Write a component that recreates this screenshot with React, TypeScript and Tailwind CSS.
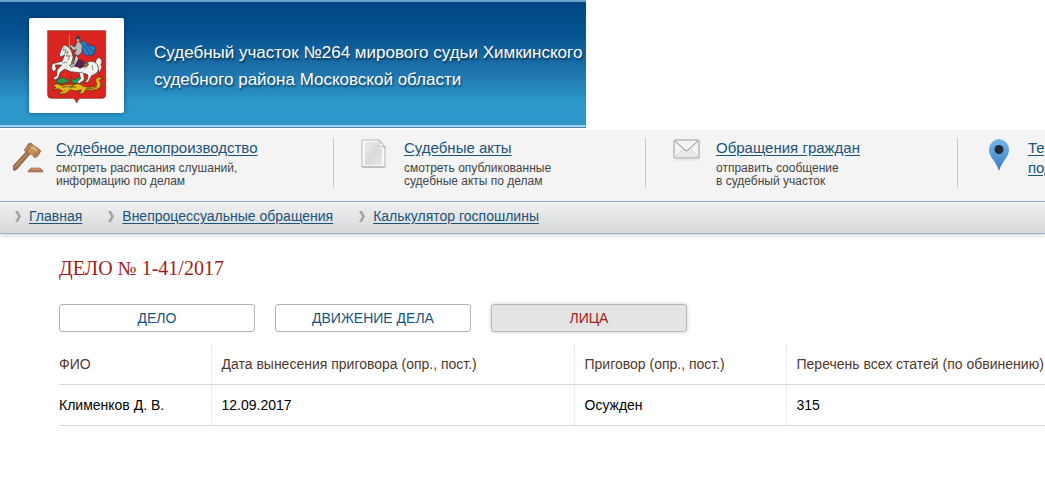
import type { ReactNode } from 'react';

type Service = {
  title: string;
  description?: string[];
  icon: ReactNode;
};

const Emblem = () => (
  <svg viewBox="12 10 285 285" className="block size-[95px]" role="img" aria-label="Герб Московской области">
    <path d="M68 48H242V240Q242 251 231 251H168Q159 251 155 265Q151 251 142 251H79Q68 251 68 240Z" fill="#da2420" stroke="#7d2524" strokeWidth="2" />
    {/* dragon */}
    <g stroke="#3c3512" strokeWidth="2" strokeLinejoin="round">
      <path d="M93 204Q99 185 120 190L134 202L119 205L107 207Z" fill="#249a4c" />
      <path d="M137 188Q149 203 166 181L168 204L150 208L140 202Z" fill="#249a4c" />
      <path d="M82 212L97 207L111 213Q126 206 145 211Q158 203 166 209Q179 220 200 217Q222 215 213 203Q208 194 219 188Q230 184 230 193L222 197Q236 214 217 224Q200 230 183 225L174 237L163 238L169 226L151 229L136 225L121 237L99 239L112 228L98 222L86 227L92 217Z" fill="#e6b51b" />
      <path d="M111 218Q134 213 153 218M182 222Q203 225 217 216M122 225L114 233M146 212L134 221" fill="none" />
    </g>
    {/* tail */}
    <path d="M211 142Q217 125 226 130Q235 138 228 151Q235 158 226 167L223 177L219 163L212 169L217 153L208 151Z" fill="#eeeeec" stroke="#302927" strokeWidth="2" />
    {/* horse */}
    <path d="M112 97L119 91L124 94Q137 98 140 112L145 130L163 143L187 143Q205 134 217 150Q225 165 213 177L200 183L190 202L178 205L187 193L189 181L176 175L178 196L164 206L154 204L167 192L162 174L136 171L121 164L106 173L100 190L88 197L86 188L95 184L96 166L110 151L91 151L94 164L85 172L79 160L82 147L111 140L119 121L107 127L102 121Z" fill="#f3f3f0" stroke="#342d2b" strokeWidth="2" strokeLinejoin="round" />
    <path d="M118 97L115 108L124 104L119 116L129 110L124 125L136 123L129 136M112 145L125 143M119 162L110 170M190 150L181 162M201 151L204 166M162 174L174 173" fill="none" stroke="#5b5552" strokeWidth="2" />
    {/* saddle */}
    <path d="M144 130L164 145L188 145L190 151L179 157L150 156L139 146Z" fill="#a37a2d" stroke="#3a292c" strokeWidth="2" />
    <path d="M149 138Q163 130 178 143Q178 157 165 161L150 151Z" fill="#632052" stroke="#33212c" strokeWidth="2" />
    {/* rider */}
    <path d="M167 81Q183 75 187 90L208 94L213 107L207 108L211 117L202 116L202 124L192 120L186 124L177 118L171 105Z" fill="#2580c2" stroke="#243a5c" strokeWidth="2" />
    <path d="M176 91L193 116M183 89L203 111" stroke="#134f93" strokeWidth="3" />
    <path d="M158 79L167 84L172 93L171 113L159 124L147 119L154 104L145 108L134 94L138 89L149 97Z" fill="#b8bcbf" stroke="#28292c" strokeWidth="2" />
    <path d="M154 120L161 132L151 151L140 158L133 152L146 147L149 132Z" fill="#d0d2d2" stroke="#302d30" strokeWidth="2" />
    <ellipse cx="159" cy="76" rx="5" ry="6" fill="#d4ad90" stroke="#34292b" />
    <path d="M153 75Q150 61 161 63Q168 66 166 78L160 72Z" fill="#3b4046" />
    <path d="M133 60V104" stroke="#c8962e" strokeWidth="3" />
    <path d="M133 103L125 153L113 207" fill="none" stroke="#bd8637" strokeWidth="1" />
  </svg>
);

const GavelIcon = () => (
  <svg viewBox="0 0 32 34" className="h-[34px] w-8" aria-hidden="true">
    <path d="M14 12L17 15L4 30Q1 33 0 30Q-1 28 1 26Z" fill="#a5704f" stroke="#80503a" strokeWidth=".8" />
    <path d="M2 28L14 15" stroke="#cf9a73" />
    <path d="M17 4L21 7L25 9L27 14L24 18L19 16L15 14L13 9L15 5Z" fill="#c6915f" stroke="#a0714c" strokeWidth=".7" />
    <path d="M18 4L20 6L13 13L11 11Z" fill="#b98258" stroke="#946844" strokeWidth=".7" />
    <path d="M26 10L28 12L22 19L20 17Z" fill="#b98258" stroke="#946844" strokeWidth=".7" />
    <path d="M18 8L22 10L24 12" fill="none" stroke="#deb482" strokeWidth="2" />
    <path d="M18 29H27L30 32V33H15V32Z" fill="#b87859" stroke="#93644e" strokeWidth=".6" />
    <path d="M18 30H27" stroke="#daa27f" />
  </svg>
);

const DocumentIcon = () => (
  <svg viewBox="0 0 26 30" className="h-[30px] w-[26px]" aria-hidden="true">
    <defs>
      <linearGradient id="paper" x2="1" y2="1">
        <stop stopColor="#eee" />
        <stop offset=".5" stopColor="#d9d9d9" />
        <stop offset="1" stopColor="#e8e8e8" />
      </linearGradient>
    </defs>
    <path d="M1 1H18L24 8V28H1Z" fill="#f8f8f8" stroke="#b8b8b8" />
    <path d="M4 3H17V9H21V26H4Z" fill="url(#paper)" />
    <path d="M18 1Q19 7 17 8Q21 6 24 9Z" fill="#fff" stroke="#aaa" strokeWidth=".8" />
    <path d="M1 28H24" stroke="#aaa" />
  </svg>
);

const MailIcon = () => (
  <svg viewBox="0 0 28 22" className="h-[22px] w-7" aria-hidden="true">
    <path d="M2 20H26V22H2Z" fill="#e9e9e9" />
    <rect x="1" y="1" width="25" height="18" rx="1" fill="#f3f4f4" stroke="#999d9e" />
    <path d="M2 18L10 10L13 12H15L18 10L25 18Z" fill="#e5e7e8" />
    <path d="M2 2L12 11Q13.5 13 15 11L25 2" fill="none" stroke="#858a8b" />
    <path d="M2 18L10 10M18 10L25 18" stroke="#d4d6d7" />
  </svg>
);

const PinIcon = () => (
  <svg viewBox="-3 0 28 32" className="h-8 w-7" aria-hidden="true">
    <defs>
      <linearGradient id="pin" x2="0" y2="1">
        <stop stopColor="#78b6e8" />
        <stop offset="1" stopColor="#347dc5" />
      </linearGradient>
    </defs>
    <path d="M11 0A10.5 10.5 0 0 1 21 11C21 18 14 22 11 32C8 22 1 18 1 11A10.5 10.5 0 0 1 11 0Z" fill="url(#pin)" />
    <circle cx="11" cy="10.5" r="4.5" fill="#202833" />
  </svg>
);

const Chevron = () => (
  <svg viewBox="0 0 7 11" className="h-[11px] w-[7px] shrink-0" aria-hidden="true">
    <path d="M0 0H3L6 5.5L3 11H0L3 5.5Z" fill="#a6a6a6" />
  </svg>
);

const services: Service[] = [
  {
    title: 'Судебное делопроизводство',
    description: ['смотреть расписания слушаний,', 'информацию по делам'],
    icon: <GavelIcon />,
  },
  {
    title: 'Судебные акты',
    description: ['смотреть опубликованные', 'судебные акты по делам'],
    icon: <DocumentIcon />,
  },
  {
    title: 'Обращения граждан',
    description: ['отправить сообщение', 'в судебный участок'],
    icon: <MailIcon />,
  },
  {
    title: 'Территориальная подсудность',
    icon: <PinIcon />,
  },
];

const links = ['Главная', 'Внепроцессуальные обращения', 'Калькулятор госпошлины'];
const tabs = ['ДЕЛО', 'ДВИЖЕНИЕ ДЕЛА', 'ЛИЦА'];
const columns = ['ФИО', 'Дата вынесения приговора (опр., пост.)', 'Приговор (опр., пост.)', 'Перечень всех статей (по обвинению)'];
const row = ['Клименков Д. В.', '12.09.2017', 'Осужден', '315'];

const App = () => {
  return (
    <div className="min-h-screen overflow-hidden bg-white font-['Liberation_Sans',Arial,sans-serif] text-sm text-black">
      <header className="mb-0.5 flex h-32 w-full max-w-[586px] items-center gap-[30px] border-t-2 border-b border-t-[#69a5ca] border-b-[#467fae] bg-[linear-gradient(#004583_0%,#075391_25%,#2075ad_57%,#2b97c9_79%,#2b97ca_98%,#b3d9ec_99%)] pt-0.5 pl-[29px]">
        <a href="#" className="shrink-0 rounded-xs bg-white shadow-[0_0_5px_rgba(0,0,0,0.4)]">
          <Emblem />
        </a>
        <p className="text-[17px] leading-[27px] whitespace-nowrap text-white [text-shadow:1px_2px_2px_rgba(0,0,0,0.5)]">
          Судебный участок №264 мирового судьи Химкинского
          <br />
          судебного района Московской области
        </p>
      </header>

      <section className="flex h-[71px] overflow-hidden bg-[#f4f4f4] pt-2">
        {services.map((item) => (
          <div
            key={item.title}
            className="flex h-[50px] w-[312px] shrink-0 border-r border-[#c8c8c8] pl-6 first:w-[334px] first:pl-2.5 last:border-r-0"
          >
            <div className="flex w-[46px] shrink-0 items-start pt-px pl-[3px]">{item.icon}</div>
            <div className={item.description ? '' : 'w-36'}>
              <a href="#" className="block text-[15px] leading-5 text-[#1b5379] underline underline-offset-2">
                {item.title}
              </a>
              {item.description && (
                <p className="mt-1 text-xs leading-[13px] whitespace-nowrap text-[#444]">
                  {item.description[0]}
                  <br />
                  {item.description[1]}
                </p>
              )}
            </div>
          </div>
        ))}
      </section>

      <nav className="flex h-[33px] items-center gap-[26px] border-y border-[#8fb0d0] bg-linear-to-b from-[#f1f1f1] to-[#d7d8da] pb-[3px] pl-[15px] shadow-[0_2px_4px_rgba(0,0,0,0.15)]">
        {links.map((link) => (
          <div key={link} className="flex items-center gap-[7px]">
            <Chevron />
            <a href="#" className="leading-5 whitespace-nowrap text-[#1b5379] underline underline-offset-2">
              {link}
            </a>
          </div>
        ))}
      </nav>

      <main className="pt-[22px] pl-[59px]">
        <h1 className="font-[Georgia,'Liberation_Serif',serif] text-xl leading-6 text-[#a31b1b]">ДЕЛО № 1-41/2017</h1>
        <div className="mt-6 flex gap-5">
          {tabs.map((tab) => (
            <button
              key={tab}
              type="button"
              className={
                tab === 'ЛИЦА'
                  ? 'h-7 w-[196px] rounded-[3px] border border-[#b8b8b8] bg-[#e4e4e4] text-[#a31b1b] shadow-[0_0_4px_rgba(0,0,0,0.2)]'
                  : 'h-7 w-[196px] rounded-[3px] border border-[#b3b3b3] bg-white text-[#1b5379]'
              }
            >
              {tab}
            </button>
          ))}
        </div>

        <table className="mt-3 w-full table-fixed border-collapse text-left whitespace-nowrap">
          <colgroup>
            <col className="w-[152px]" />
            <col className="w-[363px]" />
            <col className="w-[212px]" />
            <col />
          </colgroup>
          <thead>
            <tr className="h-10 border-b border-[#d9d9d9] text-[#52372c]">
              {columns.map((column) => (
                <th key={column} scope="col" className="border-l border-dotted border-l-[#ddd] pl-2.5 font-normal first:border-l-0 first:pl-0">
                  {column}
                </th>
              ))}
            </tr>
          </thead>
          <tbody>
            <tr className="h-[41px] border-b border-[#d9d9d9]">
              {row.map((cell) => (
                <td key={cell} className="border-l border-dotted border-l-[#ddd] pl-2.5 first:border-l-0 first:pl-0">
                  {cell}
                </td>
              ))}
            </tr>
          </tbody>
        </table>
      </main>
    </div>
  );
};

export default App;
